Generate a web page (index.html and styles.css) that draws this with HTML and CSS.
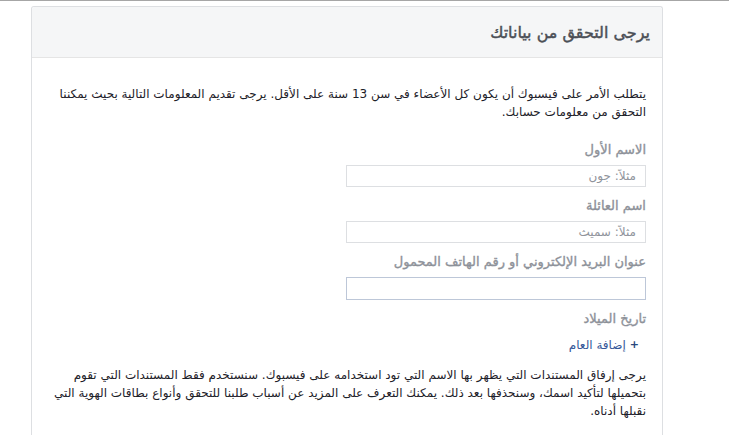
FILE: index.html
```html
<!DOCTYPE html>
<html lang="ar" dir="rtl">
<head>
<meta charset="utf-8">
<title>يرجى التحقق من بياناتك</title>
<link rel="stylesheet" href="styles.css">
</head>
<body>
<div class="card">
  <div class="card-header">
    <h2 class="title">يرجى التحقق من بياناتك</h2>
  </div>
  <div class="card-body">
    <p class="intro">يتطلب الأمر على فيسبوك أن يكون كل الأعضاء في سن 13 سنة على الأقل. يرجى تقديم المعلومات التالية بحيث يمكننا التحقق من معلومات حسابك.</p>
    <div class="field">
      <label class="label">الاسم الأول</label>
      <input class="input" type="text" placeholder="مثلاً: جون">
    </div>
    <div class="field">
      <label class="label">اسم العائلة</label>
      <input class="input" type="text" placeholder="مثلاً: سميث">
    </div>
    <div class="field">
      <label class="label">عنوان البريد الإلكتروني أو رقم الهاتف المحمول</label>
      <input class="input input-blue" type="text">
    </div>
    <div class="field">
      <label class="label">تاريخ الميلاد</label>
      <a class="add-year" href="#"><span class="plus">+</span><span>إضافة العام</span></a>
    </div>
    <p class="docs">يرجى إرفاق المستندات التي يظهر بها الاسم التي تود استخدامه على فيسبوك. سنستخدم فقط المستندات التي تقوم بتحميلها لتأكيد اسمك، وسنحذفها بعد ذلك. يمكنك التعرف على المزيد عن أسباب طلبنا للتحقق وأنواع بطاقات الهوية التي نقبلها أدناه.</p>
  </div>
</div>
</body>
</html>
```
FILE: styles.css
```css
html, body {
  margin: 0;
  padding: 0;
  background: #fff;
}
body {
  border-top: 1px solid #a6a6a6;
  font-family: "DejaVu Sans", sans-serif;
  font-size: 12px;
  color: #1d2129;
}
.card {
  box-sizing: border-box;
  width: 632px;
  margin: 5px 66px 0 0;
  border: 1px solid #dddfe2;
  border-bottom: none;
  border-radius: 3px 3px 0 0;
  min-height: 440px;
}
.card-header {
  height: 50px;
  display: flex;
  align-items: center;
  padding: 0 12px;
  background: #f5f6f7;
  border-bottom: 1px solid #e5e5e5;
  border-radius: 3px 3px 0 0;
}
.title {
  margin: 0;
  font-size: 16px;
  font-weight: normal;
  -webkit-text-stroke: 0.45px #4b4f56;
  color: #4b4f56;
}
.card-body {
  padding: 27px 16px 0 16px;
}
.intro {
  margin: 0 0 20px 0;
  line-height: 18px;
  color: #1d2129;
}
.field {
  display: flex;
  flex-direction: column;
  align-items: flex-start;
  margin-bottom: 10px;
}
.label {
  display: block;
  font-size: 13px;
  font-weight: normal;
  -webkit-text-stroke: 0.35px #8d9199;
  line-height: 18px;
  color: #8d9199;
  margin-bottom: 6px;
}
.input {
  box-sizing: border-box;
  width: 300px;
  height: 22px;
  border: 1px solid #dddfe2;
  padding: 0 9px;
  font-family: "DejaVu Sans", sans-serif;
  font-size: 12px;
  color: #1d2129;
  outline: none;
  background: #fff;
}
.input::placeholder {
  color: #90949c;
}
.input-blue {
  height: 23px;
  border-color: #bdc7d8;
}
.add-year {
  display: flex;
  align-items: center;
  gap: 4px;
  margin-top: 2px;
  padding-right: 7px;
  color: #365899;
  text-decoration: none;
  line-height: 18px;
}
.plus {
  font-weight: bold;
  font-size: 11px;
  color: #29487d;
}
.docs {
  margin: 12px 0 0 0;
  line-height: 18px;
  color: #1d2129;
}
```
